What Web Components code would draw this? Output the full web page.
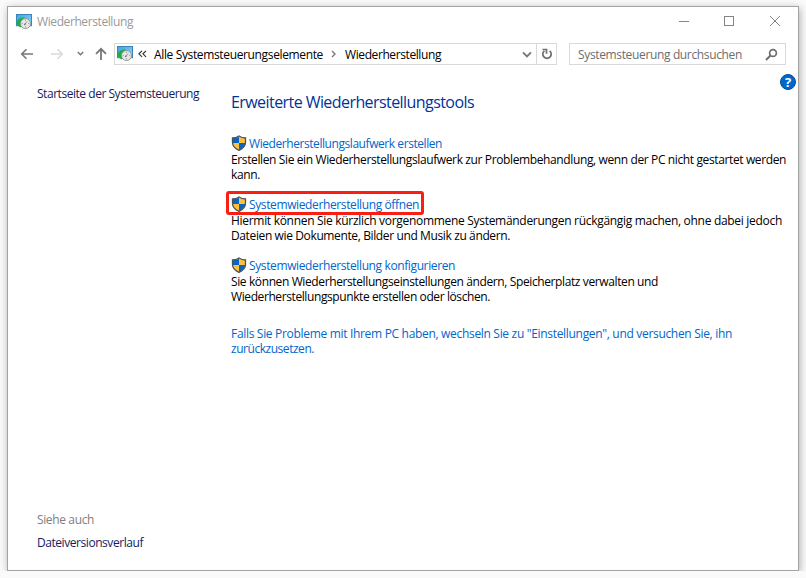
<!DOCTYPE html>
<html lang="de">
<head>
<meta charset="utf-8">
<title>Wiederherstellung</title>
<style>
  body {
    margin: 0;
    background: #fafafa;
    font: 12px/15px "Open Sans", "Noto Sans", sans-serif;
    color: #000;
  }
</style>
</head>
<body>
<recovery-window></recovery-window>

<script>
const define = (name, html, setup) => {
  const template = document.createElement("template");
  template.innerHTML = html;
  window.customElements.define(name, class extends HTMLElement {
    constructor() {
      super();
      this.attachShadow({ mode: "open" });
      this.shadowRoot.appendChild(template.content.cloneNode(true));
    }

    connectedCallback() {
      if (setup) setup(this);
    }
  });
};

// One line of text, tracked so that it takes up the given width
define("text-line", `
<style>
  :host { display: block; width: max-content; white-space: nowrap; }
</style>
<slot></slot>
`, (el) => {
  const width = Number(el.getAttribute("width"));
  const natural = el.getBoundingClientRect().width;
  const count = el.textContent.length;
  if (width && natural) el.style.letterSpacing = `${(width - natural) / count}px`;
});

define("recovery-icon", `
<style>
  :host { display: block; width: 16px; height: 16px; flex: none; }
  svg { display: block; }
</style>
<svg width="16" height="16" viewBox="0 0 16 16">
  <defs>
    <linearGradient id="sky" x1="0" y1="0" x2="1" y2="1">
      <stop offset="0" stop-color="#3ba3e8"/>
      <stop offset="1" stop-color="#8ed8fb"/>
    </linearGradient>
  </defs>
  <rect x=".5" y=".5" width="15" height="11.2" fill="url(#sky)" stroke="#3a86bb"/>
  <path d="M.3 8.500C1.200 5.500 4 3.300 8.300 3.200L9 6 5.800 9.500 5 13.500C2.800 12.800 1 11 .3 8.500z" fill="#22ab41"/>
  <circle cx="9.500" cy="9.600" r="5" fill="#e6e9e8" stroke="#8b908f" stroke-width=".9"/>
  <path d="M9.500 5.800v1M13.300 9.600h-1M9.500 13.400v-1M5.800 9.600h1M8.800 10.400l2.300-2.900" fill="none" stroke="#777" stroke-width=".8"/>
  <circle cx="8.800" cy="10.300" r=".9" fill="#777"/>
</svg>
`);

define("shield-icon", `
<style>
  :host { display: block; width: 16px; height: 16px; flex: none; }
  svg { display: block; }
</style>
<svg width="16" height="16" viewBox="0 0 16 16">
  <defs>
    <clipPath id="body"><path d="M8 1.500C6.200 2.600 4 3.200 1.700 3.200v4.300c0 3.300 2.400 5.700 6.300 7.400 3.900-1.700 6.300-4.100 6.300-7.400V3.200C12 3.200 9.800 2.600 8 1.500z"/></clipPath>
  </defs>
  <g clip-path="url(#body)">
    <path fill="#0865c8" d="M0 0h8v8H0zM8 8h8v8H8z"/>
    <path fill="#ffc03c" d="M8 0h8v8H8zM0 8h8v8H0z"/>
  </g>
  <path d="M8 1C6.200 2.300 4 3 1.500 3v4.500c0 3.400 2.500 6 6.500 7.800 4-1.800 6.500-4.400 6.500-7.800V3C12 3 9.800 2.300 8 1z" fill="none" stroke="#4b5054" stroke-width="1.300"/>
</svg>
`);

define("title-bar", `
<style>
  :host { display: flex; height: 29px; padding-left: 8px; align-items: center; color: #999; }
  .name { margin-left: 5px; flex: 1; }
  svg { flex: none; margin-right: 16px; }
</style>
<recovery-icon></recovery-icon>
<div class="name"><slot></slot></div>
<svg width="104" height="13" viewBox="0 0 104 13" fill="none" stroke="#858585">
  <path d="M1 6.500h10"/>
  <rect x="46.500" y="1.500" width="9" height="9"/>
  <path d="M92 1l10 10M102 1L92 11"/>
</svg>
`);

define("nav-bar", `
<style>
  :host { display: flex; height: 22px; margin-top: 7px; padding-right: 12px; }
  .arrows { flex: none; width: 106px; }
  .box { box-sizing: border-box; display: flex; align-items: center; border: 1px solid #d9d9d9; }
  .address { width: 443px; padding-left: 2px; }
  .search { width: 217px; margin-left: 12px; padding: 0 7px 0 8px; color: #6d6d6d; justify-content: space-between; }
  .back { margin: 0 7px 0 5px; }
  .next { margin: 0 8px 0 7px; }
  .drop { margin-left: auto; margin-right: 4px; }
  .reload { display: flex; align-items: center; justify-content: center; align-self: stretch; width: 19px; border-left: 1px solid #d9d9d9; }
  svg { display: block; flex: none; }
</style>
<svg class="arrows" width="106" height="22" viewBox="0 0 106 22" fill="none">
  <path d="M25 11H14M18.500 6.200L13.700 11l4.800 4.800" stroke="#777" stroke-width="1.600"/>
  <path d="M43 11h11M49.500 6.200l4.800 4.800-4.800 4.800" stroke="#d9d9d9" stroke-width="1.500"/>
  <path d="M69.800 9l2.700 2.700L75.200 9" stroke="#777" stroke-width="1.500"/>
  <path d="M93 17V6M88 10.800l5-5 5 5" stroke="#777" stroke-width="1.800"/>
</svg>
<div class="box address">
  <recovery-icon></recovery-icon>
  <svg class="back" width="9" height="8" viewBox="0 0 9 8" fill="none" stroke="#333" stroke-width="1.200"><path d="M4 .8L1 3.800l3 3M8 .8L5 3.800l3 3"/></svg>
  <text-line width="169">Alle Systemsteuerungselemente</text-line>
  <svg class="next" width="7" height="8" viewBox="0 0 7 8" fill="none" stroke="#777" stroke-width="1.400"><path d="M2 1l3 3-3 3"/></svg>
  <text-line width="96">Wiederherstellung</text-line>
  <svg class="drop" width="10" height="7" viewBox="0 0 10 7" fill="none" stroke="#777" stroke-width="1.900"><path d="M1 1.400l4 4 4-4"/></svg>
  <div class="reload">
    <svg width="12" height="12" viewBox="0 0 12 12" fill="none" stroke="#6f6f6f" stroke-width="1.700"><path d="M8.600 2.800A4.200 4.200 0 1 1 3.400 2.800"/><path d="M1.500 1.500h4v4.200"/></svg>
  </div>
</div>
<div class="box search">
  <text-line width="164">Systemsteuerung durchsuchen</text-line>
  <svg width="13" height="13" viewBox="0 0 13 13" fill="none" stroke="#6f6f6f"><circle cx="8" cy="5" r="3.400" stroke-width="1.700"/><path d="M5.500 7.500L1 12" stroke-width="2"/></svg>
</div>
`);

define("tool-entry", `
<style>
  :host { display: block; position: relative; margin-bottom: 14px; }
  .link { display: flex; height: 17px; align-items: flex-start; gap: 2px; color: #0066cc; }
  ::slotted([slot="link"]) { margin-top: 1px; }
  /* callout frame drawn over the link */
  .frame { display: none; }
  :host([marked]) .frame {
    display: block; position: absolute; box-sizing: border-box;
    left: -5px; top: -5px; width: 198px; height: 24px;
    border: 3px solid #fb1e13; border-radius: 3px;
  }
</style>
<div class="link"><shield-icon></shield-icon><slot name="link"></slot></div>
<slot></slot>
<div class="frame"></div>
`);

define("side-pane", `
<style>
  :host { display: flex; flex-direction: column; width: 194px; box-sizing: border-box; padding: 21px 0 20px; color: #151b61; }
  .label { margin-top: auto; margin-bottom: 8px; color: #808080; }
</style>
<text-line width="162">Startseite der Systemsteuerung</text-line>
<text-line class="label" width="57">Siehe auch</text-line>
<text-line width="106">Dateiversionsverlauf</text-line>
`);

define("help-button", `
<style>
  :host {
    box-sizing: border-box; width: 16px; height: 16px;
    border: 1px solid #0a4c8c; border-radius: 50%; background: #0068cb;
    color: #fff; font-size: 13px; font-weight: bold; line-height: 14px; text-align: center;
  }
</style>
<slot></slot>
`);

define("recovery-window", `
<style>
  :host {
    display: flex; flex-direction: column; box-sizing: border-box;
    width: 792px; height: 565px; margin: 6px 0 0 7px;
    border: 1px solid #a3a3a3; background: #fff;
    box-shadow: 1px 2px 8px rgba(0, 0, 0, .3);
  }
  .body { display: flex; flex: 1; padding-left: 29px; }
  main { flex: 1; padding-top: 27px; }
  .heading { font-size: 16px; line-height: 20px; color: #003399; margin-bottom: 23px; }
  .note { color: #0066cc; padding-top: 8px; }
  help-button { position: absolute; left: 780px; top: 74px; }
</style>
<title-bar><text-line width="96">Wiederherstellung</text-line></title-bar>
<nav-bar></nav-bar>
<div class="body">
  <side-pane></side-pane>
  <main>
    <text-line class="heading" width="243">Erweiterte Wiederherstellungstools</text-line>
    <tool-entry>
      <text-line slot="link" width="193">Wiederherstellungslaufwerk erstellen</text-line>
      <text-line width="555">Erstellen Sie ein Wiederherstellungslaufwerk zur Problembehandlung, wenn der PC nicht gestartet werden</text-line>
      <text-line width="29">kann.</text-line>
    </tool-entry>
    <tool-entry marked>
      <text-line slot="link" width="170">Systemwiederherstellung öffnen</text-line>
      <text-line width="551">Hiermit können Sie kürzlich vorgenommene Systemänderungen rückgängig machen, ohne dabei jedoch</text-line>
      <text-line width="279">Dateien wie Dokumente, Bilder und Musik zu ändern.</text-line>
    </tool-entry>
    <tool-entry>
      <text-line slot="link" width="206">Systemwiederherstellung konfigurieren</text-line>
      <text-line width="427">Sie können Wiederherstellungseinstellungen ändern, Speicherplatz verwalten und</text-line>
      <text-line width="259">Wiederherstellungspunkte erstellen oder löschen.</text-line>
    </tool-entry>
    <div class="note">
      <text-line width="501">Falls Sie Probleme mit Ihrem PC haben, wechseln Sie zu "Einstellungen", und versuchen Sie, ihn</text-line>
      <text-line width="83">zurückzusetzen.</text-line>
    </div>
  </main>
</div>
<help-button>?</help-button>
`);
</script>
</body>
</html>
